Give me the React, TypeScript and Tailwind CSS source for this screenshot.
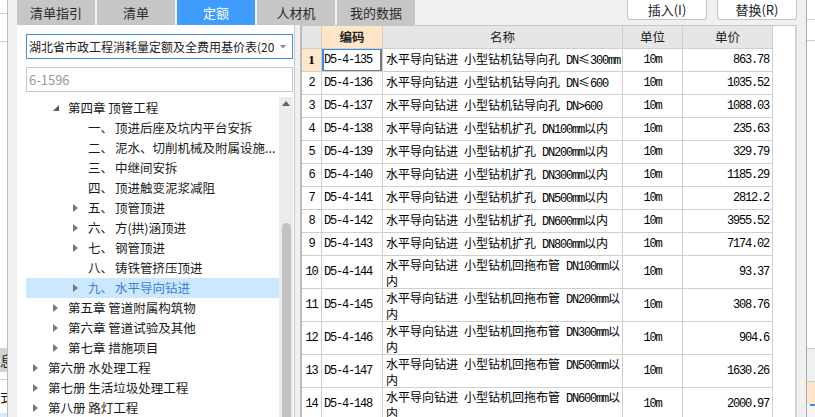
import React from 'react';

const MONO = "font-['Liberation_Mono',monospace] text-[12px] tracking-[-1.2px] whitespace-pre";

function Mixed({ s }: { s: string }) {
  const parts = s.match(/[\x20-\x7e]+|[^\x20-\x7e]+/g) || [];
  return (
    <>
      {parts.map((p, i) =>
        /^[\x20-\x7e]+$/.test(p) ? (
          <span key={i} className={MONO}>{p}</span>
        ) : (
          <span key={i}>{p}</span>
        )
      )}
    </>
  );
}

type TreeItem = {
  level: 0 | 1 | 2;
  tri: 'none' | 'right' | 'down';
  num?: string;
  text: string;
  selected?: boolean;
};

const tree: TreeItem[] = [
  { level: 1, tri: 'down', text: '第四章 顶管工程' },
  { level: 2, tri: 'none', num: '一、', text: '顶进后座及坑内平台安拆' },
  { level: 2, tri: 'none', num: '二、', text: '泥水、切削机械及附属设施...' },
  { level: 2, tri: 'none', num: '三、', text: '中继间安拆' },
  { level: 2, tri: 'none', num: '四、', text: '顶进触变泥浆减阻' },
  { level: 2, tri: 'right', num: '五、', text: '顶管顶进' },
  { level: 2, tri: 'right', num: '六、', text: '方(拱)涵顶进' },
  { level: 2, tri: 'right', num: '七、', text: '钢管顶进' },
  { level: 2, tri: 'none', num: '八、', text: '铸铁管挤压顶进' },
  { level: 2, tri: 'right', num: '九、', text: '水平导向钻进', selected: true },
  { level: 1, tri: 'right', text: '第五章 管道附属构筑物' },
  { level: 1, tri: 'right', text: '第六章 管道试验及其他' },
  { level: 1, tri: 'right', text: '第七章 措施项目' },
  { level: 0, tri: 'right', text: '第六册 水处理工程' },
  { level: 0, tri: 'right', text: '第七册 生活垃圾处理工程' },
  { level: 0, tri: 'right', text: '第八册 路灯工程' },
];

type Row = { n: number; code: string; name: string[]; unit: string; price: string };

const P1 = '水平导向钻进 小型钻机钻导向孔 ';
const P2 = '水平导向钻进 小型钻机扩孔 ';
const P3 = '水平导向钻进 小型钻机回拖布管 ';

const rows: Row[] = [
  { n: 1, code: 'D5-4-135', name: [P1 + 'DN≤300mm'], unit: '10m', price: '863.78' },
  { n: 2, code: 'D5-4-136', name: [P1 + 'DN≤600'], unit: '10m', price: '1035.52' },
  { n: 3, code: 'D5-4-137', name: [P1 + 'DN>600'], unit: '10m', price: '1088.03' },
  { n: 4, code: 'D5-4-138', name: [P2 + 'DN100mm以内'], unit: '10m', price: '235.63' },
  { n: 5, code: 'D5-4-139', name: [P2 + 'DN200mm以内'], unit: '10m', price: '329.79' },
  { n: 6, code: 'D5-4-140', name: [P2 + 'DN300mm以内'], unit: '10m', price: '1185.29' },
  { n: 7, code: 'D5-4-141', name: [P2 + 'DN500mm以内'], unit: '10m', price: '2812.2' },
  { n: 8, code: 'D5-4-142', name: [P2 + 'DN600mm以内'], unit: '10m', price: '3955.52' },
  { n: 9, code: 'D5-4-143', name: [P2 + 'DN800mm以内'], unit: '10m', price: '7174.02' },
  { n: 10, code: 'D5-4-144', name: [P3 + 'DN100mm以', '内'], unit: '10m', price: '93.37' },
  { n: 11, code: 'D5-4-145', name: [P3 + 'DN200mm以', '内'], unit: '10m', price: '308.76' },
  { n: 12, code: 'D5-4-146', name: [P3 + 'DN300mm以', '内'], unit: '10m', price: '904.6' },
  { n: 13, code: 'D5-4-147', name: [P3 + 'DN500mm以', '内'], unit: '10m', price: '1630.26' },
  { n: 14, code: 'D5-4-148', name: [P3 + 'DN600mm以', '内'], unit: '10m', price: '2000.97' },
];

const tabs = ['清单指引', '清单', '定额', '人材机', '我的数据'];

function TriRight() {
  return (
    <svg width="5" height="8" viewBox="0 0 5 8">
      <polygon points="0,0 5,4 0,8" fill="#7a7a7a" />
    </svg>
  );
}

function TriDown() {
  return (
    <svg width="6" height="6" viewBox="0 0 6 6">
      <polygon points="6,0 6,6 0,6" fill="#5a5a5a" />
    </svg>
  );
}

export default function App() {
  return (
    <div className="w-[815px] h-[417px] overflow-hidden flex bg-white font-['Noto_Sans_CJK_SC',sans-serif] text-[#1a1a1a]">
      {/* left background strip */}
      <div className="w-[8px] shrink-0 flex flex-col border-r border-[#bcbcbc] bg-white">
        <div className="h-[14px] border-b border-[#cfcfcf]" />
        <div className="h-[28px] border-b border-[#cfcfcf]" />
        <div className="flex-1" />
        <div className="h-[24px] bg-[#d4d4d4] overflow-hidden text-[14px] leading-[24px] whitespace-nowrap">息</div>
        <div className="h-[8px] border-b border-[#cfcfcf]" />
        <div className="h-[33px] overflow-hidden text-[14px] leading-[33px] whitespace-nowrap">式</div>
        <div className="h-[4px] bg-[#d8ecff]" />
      </div>

      {/* main window */}
      <div className="w-[789px] shrink-0 flex flex-col bg-[#f0f0f0]">
        {/* top bar */}
        <div className="h-[25px] shrink-0 flex pl-[9px]">
          {tabs.map((t) => (
            <div
              key={t}
              className={
                t === '定额'
                  ? 'w-[78px] mr-[2px] bg-[#409dfe] text-white flex items-center justify-center text-[13px]'
                  : 'w-[78px] mr-[2px] bg-[#c6c6c6] text-[#2a2a2a] flex items-center justify-center text-[13px]'
              }
            >
              {t}
            </div>
          ))}
          <div className="flex-1" />
          <div className="flex gap-[10px] items-start">
            <div className="w-[80px] h-[20px] bg-white border border-t-0 border-[#c4c4c4] rounded-b-[3px] flex items-center justify-center text-[13px] text-[#222]">
              插入(I)
            </div>
            <div className="w-[80px] h-[20px] bg-white border border-t-0 border-[#c4c4c4] rounded-b-[3px] flex items-center justify-center text-[13px] text-[#222]">
              替换(R)
            </div>
          </div>
        </div>

        {/* body */}
        <div className="flex-1 flex min-h-0 pl-[9px]">
          {/* left panel */}
          <div className="w-[278px] shrink-0 bg-white border-r border-[#c8c8c8] flex flex-col pl-[9px] pr-[1px] pt-[9px]">
            <div className="h-[25px] w-[267px] shrink-0 border border-[#3b8ee6] flex items-center pl-[2px] pr-[6px]">
              <div className="flex-1 whitespace-nowrap text-[12px] text-[#222]">
                湖北省市政工程消耗量定额及全费用基价表(20
              </div>
              <svg width="6" height="4" viewBox="0 0 6 4" className="ml-[3px] shrink-0">
                <polygon points="0,0 6,0 3,3.5" fill="#8a8a8a" />
              </svg>
            </div>
            <div className="mt-[8px] h-[25px] w-[267px] shrink-0 border border-[#c8c8c8] flex items-center pl-[2px] text-[13px] text-[#9a9a9a]">
              6-1596
            </div>
            <div className="mt-[5px] flex-1 flex min-h-0">
              <div className="w-[253px] pt-[1px] overflow-hidden">
                {tree.map((it, i) => (
                  <div
                    key={i}
                    className={
                      it.selected
                        ? 'h-[20px] flex items-center whitespace-nowrap text-[12.5px] bg-[#cce8ff] text-[#3d7fd9]'
                        : 'h-[20px] flex items-center whitespace-nowrap text-[12.5px] text-[#1a1a1a]'
                    }
                  >
                    <div className={it.level === 0 ? 'w-0 shrink-0' : it.level === 1 ? 'w-[20px] shrink-0' : 'w-[40px] shrink-0'} />
                    <div className="w-[22px] shrink-0 pl-[7px] flex items-center">
                      {it.tri === 'right' ? <TriRight /> : it.tri === 'down' ? <TriDown /> : null}
                    </div>
                    {it.num && <span className="inline-block w-[27px] shrink-0">{it.num}</span>}
                    <span>{it.text}</span>
                  </div>
                ))}
              </div>
              <div className="w-[14px] bg-[#ebebeb] flex flex-col">
                <div className="h-[12px] flex items-center justify-center">
                  <svg width="8" height="5" viewBox="0 0 8 5">
                    <polygon points="0,5 4,0 8,5" fill="#606060" />
                  </svg>
                </div>
                <div className="h-[114px]" />
                <div className="flex-1 ml-[3px] mr-[2px] rounded-t-[5px] bg-[#c2c2c2]" />
              </div>
            </div>
          </div>

          <div className="w-[5px] shrink-0" />

          {/* table container */}
          <div className="w-[497px] shrink-0 bg-white border-l-2 border-l-[#bdbdbd] border-r-2 border-r-[#d4d4d4] border-t border-t-[#c8c8c8] overflow-hidden">
            <div className="w-[471px]">
              {/* header */}
              <div className="h-[23px] flex border-b border-[#cfcfcf] text-[12.5px] text-[#222]">
                <div className="w-[20px] bg-[#e6e6e6] border-r border-[#cfcfcf]" />
                <div className="w-[61px] bg-[#ffe6c8] border-r border-[#cfcfcf] flex items-center justify-center font-bold">编码</div>
                <div className="w-[240px] bg-[#e6e6e6] border-r border-[#cfcfcf] flex items-center justify-center">名称</div>
                <div className="w-[60px] bg-[#e6e6e6] border-r border-[#cfcfcf] flex items-center justify-center">单位</div>
                <div className="w-[90px] bg-[#e6e6e6] border-r border-[#cfcfcf] flex items-center justify-center">单价</div>
              </div>
              {rows.map((r) => {
                const two = r.name.length > 1;
                return (
                  <div
                    key={r.n}
                    className={two ? 'h-[33px] flex border-b border-[#cfcfcf] text-[12px] text-black' : 'h-[23px] flex border-b border-[#cfcfcf] text-[12px] text-black'}
                  >
                    <div
                      className={
                        r.n === 1
                          ? 'w-[20px] bg-[#ffe6c8] border-r border-[#cfcfcf] flex items-center justify-center'
                          : 'w-[20px] border-r border-[#cfcfcf] flex items-center justify-center'
                      }
                    >
                      <span className={r.n === 1 ? "font-['Liberation_Serif',serif] text-[13px] font-bold" : MONO}>{r.n}</span>
                    </div>
                    <div
                      className={
                        r.n === 1
                          ? 'w-[61px] border-r border-[#cfcfcf] flex items-center pl-[2px] shadow-[inset_2px_1px_0_#3b8de0,inset_-2px_-1px_0_#7a7a7a]'
                          : 'w-[61px] border-r border-[#cfcfcf] flex items-center pl-[2px]'
                      }
                    >
                      <span className={MONO}>{r.code}</span>
                    </div>
                    <div
                      className={
                        two
                          ? 'w-[240px] border-r border-[#cfcfcf] pl-[3px] pt-[2px] leading-[14px] whitespace-nowrap overflow-hidden'
                          : 'w-[240px] border-r border-[#cfcfcf] pl-[3px] flex items-center whitespace-nowrap overflow-hidden'
                      }
                    >
                      {two ? (
                        <div>
                          <div><Mixed s={r.name[0]} /></div>
                          <div><Mixed s={r.name[1]} /></div>
                        </div>
                      ) : (
                        <div><Mixed s={r.name[0]} /></div>
                      )}
                    </div>
                    <div className="w-[60px] border-r border-[#cfcfcf] flex items-center justify-center">
                      <span className={MONO}>{r.unit}</span>
                    </div>
                    <div className="w-[90px] border-r border-[#cfcfcf] flex items-center justify-end pr-[3px]">
                      <span className={MONO}>{r.price}</span>
                    </div>
                  </div>
                );
              })}
            </div>
          </div>
        </div>
      </div>

      {/* right background strip */}
      <div className="w-[18px] shrink-0 flex">
        <div className="w-[9px] bg-[#f0f0f0]" />
        <div className="w-[9px] border-l border-[#a8a8a8] bg-white flex flex-col">
          <div className="h-[20px] border-b border-[#cfcfcf]" />
          <div className="h-[21px] border-b border-[#cfcfcf]" />
          <div className="flex-1" />
          <div className="h-[34px] bg-[#f0f0f0] border-y border-[#cfcfcf]" />
          <div className="h-[22px] bg-[#ffe6c8]" />
          <div className="h-[2px] ml-[3px] bg-[#3b8de0]" />
          <div className="h-[11px] bg-[#f5f5f5]" />
        </div>
      </div>
    </div>
  );
}
